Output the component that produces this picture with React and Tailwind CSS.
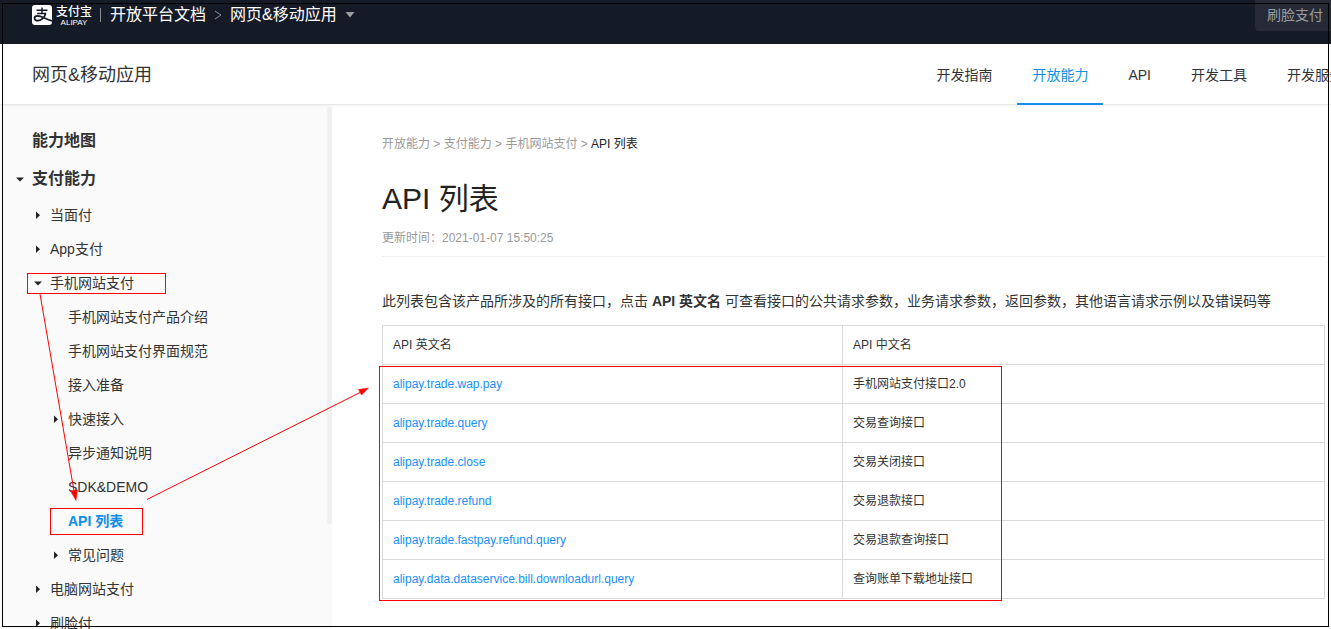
import React from "react";

const nav = [
  { label: "开发指南" },
  { label: "开放能力", active: true },
  { label: "API" },
  { label: "开发工具" },
  { label: "开发服务" },
];

const tree = [
  { label: "当面付", depth: 1, arrow: "right" },
  { label: "App支付", depth: 1, arrow: "right" },
  { label: "手机网站支付", depth: 1, arrow: "down", mark: "parent" },
  { label: "手机网站支付产品介绍", depth: 2 },
  { label: "手机网站支付界面规范", depth: 2 },
  { label: "接入准备", depth: 2 },
  { label: "快速接入", depth: 2, arrow: "right" },
  { label: "异步通知说明", depth: 2 },
  { label: "SDK&DEMO", depth: 2 },
  { label: "API 列表", depth: 2, active: true, mark: "current" },
  { label: "常见问题", depth: 2, arrow: "right" },
  { label: "电脑网站支付", depth: 1, arrow: "right" },
  { label: "刷脸付", depth: 1, arrow: "right" },
];

const apis = [
  ["alipay.trade.wap.pay", "手机网站支付接口2.0"],
  ["alipay.trade.query", "交易查询接口"],
  ["alipay.trade.close", "交易关闭接口"],
  ["alipay.trade.refund", "交易退款接口"],
  ["alipay.trade.fastpay.refund.query", "交易退款查询接口"],
  ["alipay.data.dataservice.bill.downloadurl.query", "查询账单下载地址接口"],
];

function Caret({ direction }) {
  return (
    <svg className="size-2 shrink-0" viewBox="0 0 8 8" fill="#222" aria-hidden="true">
      {direction === "down" && <path d="M0 2.5h8L4 6.5z" />}
      {direction === "right" && <path d="M2 0.5l4 3.7-4 3.8z" />}
    </svg>
  );
}

function Logo() {
  return (
    <a href="#home" aria-label="支付宝 ALIPAY" className="flex items-center gap-1 text-white">
      <svg className="size-5" viewBox="0 0 20 20" aria-hidden="true">
        <rect width="20" height="20" rx="3" fill="#fff" />
        <g fill="none" stroke="#151a27">
          <path d="M4.500 5.300h11M10 2.500v5.800M5.200 8.500h8.800" strokeWidth="1.500" />
          <path
            d="M13.700 8.300c-1.200 4.400-4.600 7.300-8 7.300-2 0-3.200-1-3.200-2.300 0-1.500 1.400-2.400 3.200-2.400 3.800 0 7 2.700 14.300 5"
            strokeWidth="1.800"
          />
        </g>
      </svg>
      <span className="flex flex-col items-center">
        <span className="text-xs leading-[14px] font-medium">支付宝</span>
        <span className="text-[8px] leading-[7px]">ALIPAY</span>
      </span>
    </a>
  );
}

function TreeItem({ item }) {
  return (
    <li className={item.depth === 1 ? "flex h-[34px] items-center pl-[27px]" : "flex h-[34px] items-center pl-[50px]"}>
      <a
        href="#doc"
        className={
          item.mark === "parent"
            ? "flex h-[21px] w-[139px] items-center gap-2 border border-[#ff0000] pl-[6px]"
            : item.mark === "current"
              ? "flex h-[27px] w-[93px] items-center border border-[#ff0000] pl-[17px] font-bold text-[#108ee9]"
              : item.depth === 1
                ? "flex items-center gap-2 pl-[7px]"
                : "flex items-center gap-2 pl-[2px]"
        }
      >
        {item.mark !== "current" && <Caret direction={item.arrow} />}
        {item.label}
      </a>
    </li>
  );
}

export default function App() {
  return (
    <div className="relative flex h-screen flex-col overflow-hidden bg-white font-['Liberation_Sans','Noto_Sans_CJK_SC',sans-serif] text-sm text-[#333]">
      <header className="flex h-11 shrink-0 items-start justify-between bg-[#151a27] pl-8">
        <div className="flex h-[30px] items-center text-base text-white">
          <Logo />
          <span className="ml-2 h-[14px] w-px bg-[#8a8d93]" />
          <a href="#docs" className="ml-[9px]">开放平台文档</a>
          <svg className="mx-2 h-[10px] w-2" viewBox="0 0 8 10" fill="none" stroke="#8a8d93" aria-hidden="true">
            <path d="M1 1l6 4-6 4" />
          </svg>
          <button type="button" className="flex items-center gap-2">
            网页&amp;移动应用
            <svg className="h-[6px] w-[10px]" viewBox="0 0 10 6" fill="#9a9ca1" aria-hidden="true">
              <path d="M0.500 0h9L5 5.500z" />
            </svg>
          </button>
        </div>
        <button type="button" className="h-[31px] rounded-bl-sm bg-[#262a36] pr-2 pb-[2px] pl-3 text-sm text-[#9a9ca1]">
          刷脸支付
        </button>
      </header>

      <div className="z-10 flex h-[61px] shrink-0 items-stretch justify-between border-b border-[#e8e8e8] bg-white pl-8 shadow-xs">
        <h2 className="flex items-center pt-[2px] text-lg font-normal">网页&amp;移动应用</h2>
        <nav className="-mr-[27px] -mb-px flex gap-[10px]">
          {nav.map((n) => (
            <a
              key={n.label}
              href="#nav"
              className={
                n.active
                  ? "flex items-center border-b-2 border-[#108ee9] px-[15px] pt-[2px] text-[#108ee9]"
                  : "flex items-center border-b-2 border-transparent px-[15px] pt-[2px]"
              }
            >
              {n.label}
            </a>
          ))}
        </nav>
      </div>

      <div className="flex min-h-0 flex-1">
        <aside className="flex w-[332px] shrink-0 justify-between overflow-hidden bg-[#fafafa]">
          <div className="pt-[17px]">
            <h3 className="flex h-[38px] items-center pl-8 text-base font-bold">能力地图</h3>
            <h3 className="flex h-[38px] items-center gap-2 pl-4 text-base font-bold">
              <Caret direction="down" />
              支付能力
            </h3>
            <ul className="text-sm">
              {tree.map((item) => (
                <TreeItem key={item.label} item={item} />
              ))}
            </ul>
          </div>
          <div className="mt-[2px] h-[417px] w-[5px] rounded-full bg-[#f0f0f0]" />
        </aside>

        <main className="min-w-0 flex-1 pt-[29px] pr-[6px] pl-[50px]">
          <nav className="text-xs leading-5 text-[#999]">
            <a href="#a">开放能力</a> &gt; <a href="#b">支付能力</a> &gt; <a href="#c">手机网站支付</a> &gt;{" "}
            <span className="text-[#222]">API 列表</span>
          </nav>
          <h1 className="mt-6 text-[30px] leading-[42px] font-normal text-[#222]">API 列表</h1>
          <p className="mt-2 border-b border-[#eee] pb-2 text-xs leading-5 text-[#999]">更新时间：2021-01-07 15:50:25</p>
          <p className="mt-8 text-sm leading-6">
            此列表包含该产品所涉及的所有接口，点击 <strong>API 英文名</strong>{" "}
            可查看接口的公共请求参数，业务请求参数，返回参数，其他语言请求示例以及错误码等
          </p>
          <table className="mt-3 w-full table-fixed border-collapse text-left text-xs">
            <thead>
              <tr className="h-[39px]">
                <th className="w-[460px] border border-[#d9d9d9] px-[10px] font-normal">API 英文名</th>
                <th className="border border-[#d9d9d9] px-[10px] font-normal">API 中文名</th>
              </tr>
            </thead>
            <tbody>
              {apis.map(([en, zh]) => (
                <tr key={en} className="h-[39px]">
                  <td className="border border-[#d9d9d9] px-[10px]">
                    <a href="#api" className="text-[#1890ff]">{en}</a>
                  </td>
                  <td className="border border-[#d9d9d9] px-[10px]">{zh}</td>
                </tr>
              ))}
            </tbody>
          </table>
        </main>
      </div>

      <div className="pointer-events-none absolute top-[366px] left-[379px] z-20 h-[235px] w-[623px] border border-[#ff0000]" />
      <svg className="pointer-events-none absolute top-[290px] left-[30px] z-20 h-[220px] w-[345px]" viewBox="30 290 345 220" fill="#ff0000" stroke="#ff0000" aria-hidden="true">
        <path d="M40 294L74 491M147 499.500L360 392.500" fill="none" />
        <path d="M70.500 491l7-1-1.500 10.500zM358.500 389.500l10-1.500-7 7z" strokeWidth="0.500" />
      </svg>
      <div className="pointer-events-none absolute top-[3px] right-[2px] bottom-[2px] left-[2px] z-30 border border-black" />
    </div>
  );
}
